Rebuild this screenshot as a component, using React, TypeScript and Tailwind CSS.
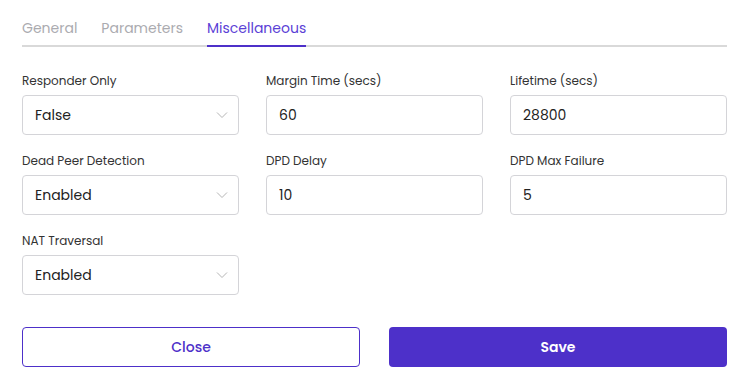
import React from "react";

const font = { fontFamily: "Poppins, Inter, 'Noto Sans', sans-serif" };

function Chevron() {
  return (
    <svg width="12" height="8" viewBox="0 0 12 8" fill="none" className="shrink-0">
      <path d="M1 1.5L6 6.5L11 1.5" stroke="#b5b5b5" strokeWidth="1" />
    </svg>
  );
}

function Field({ label, value, select }: { label: string; value: string; select?: boolean }) {
  return (
    <div className="flex flex-col">
      <div className="h-4 leading-[19px] text-[12px] text-[#333]">{label}</div>
      <div className="mt-2 h-10 rounded-[4px] border border-[#d4d4d8] flex items-center justify-between pl-3 pr-[10px] text-[14px] text-[#222]">
        <span>{value}</span>
        {select && <Chevron />}
      </div>
    </div>
  );
}

export default function App() {
  return (
    <div className="w-[742px] h-[375px] bg-white px-[22px] pt-[17px] pr-[15px]" style={font}>
      <div className="flex gap-6 border-b-2 border-[#d9d9d9] text-[14px] leading-[22px]">
        <div className="pb-[6px] text-[#ababb0]">General</div>
        <div className="pb-[6px] text-[#ababb0]">Parameters</div>
        <div className="pb-[6px] -mb-[2px] border-b-2 border-[#4d30c9] text-[#5b3fd6]">Miscellaneous</div>
      </div>
      <div className="mt-6 grid grid-cols-3 gap-x-[27px] gap-y-4">
        <Field label="Responder Only" value="False" select />
        <Field label="Margin Time (secs)" value="60" />
        <Field label="Lifetime (secs)" value="28800" />
        <Field label="Dead Peer Detection" value="Enabled" select />
        <Field label="DPD Delay" value="10" />
        <Field label="DPD Max Failure" value="5" />
        <Field label="NAT Traversal" value="Enabled" select />
      </div>
      <div className="mt-8 grid grid-cols-2 gap-x-[29px]">
        <button className="h-10 rounded-[4px] border border-[#4d30c9] bg-white text-[#4d30c9] text-[14px] font-medium">
          Close
        </button>
        <button className="h-10 rounded-[4px] bg-[#4d30c9] text-white text-[14px] font-semibold">
          Save
        </button>
      </div>
    </div>
  );
}
